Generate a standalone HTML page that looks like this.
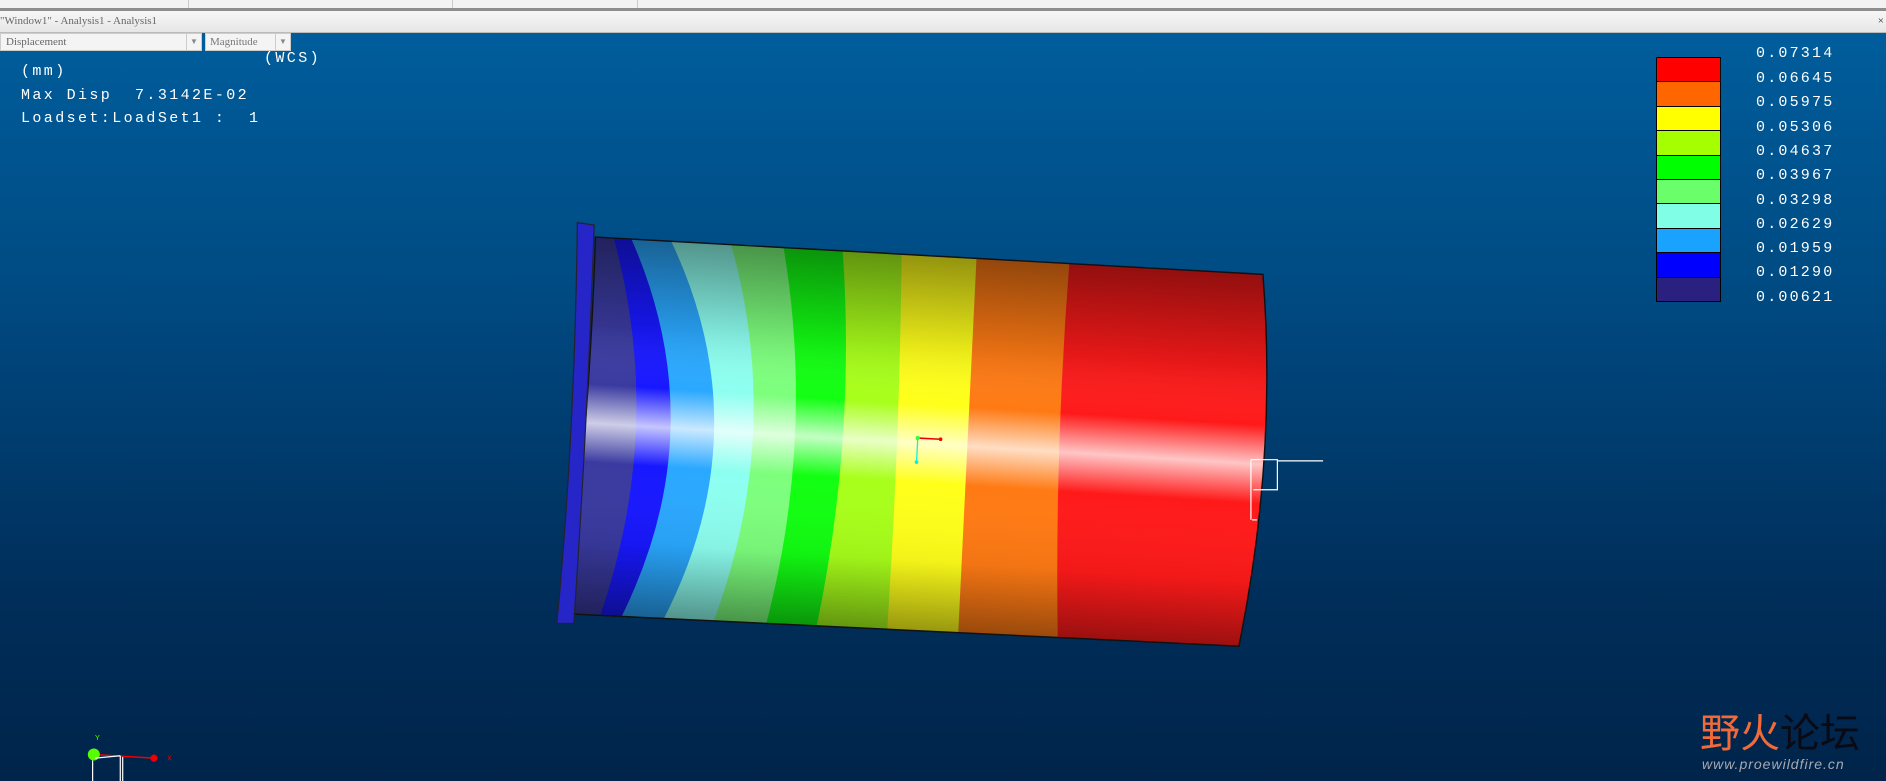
<!DOCTYPE html>
<html><head><meta charset="utf-8"><style>
html,body{margin:0;padding:0;width:1886px;height:781px;overflow:hidden;background:#00406f}
.bg{position:absolute;left:0;top:33px;width:1886px;height:748px;background:linear-gradient(#005d9b,#004a82 35%,#002e5a 75%,#00244a)}
.t{position:absolute;color:#fff;font-family:"Liberation Mono",monospace;font-size:15px;letter-spacing:2.4px;white-space:pre;line-height:18px}
.lg{position:absolute;color:#fff;font-family:"Liberation Mono",monospace;font-size:15px;letter-spacing:2.2px;line-height:18px}
</style></head><body>
<div style="position:absolute;left:0;top:0;width:1886px;height:8px;background:#f3f3f3"></div>
<div style="position:absolute;left:188px;top:0;width:1px;height:8px;background:#ccc"></div>
<div style="position:absolute;left:452px;top:0;width:1px;height:8px;background:#ccc"></div>
<div style="position:absolute;left:637px;top:0;width:1px;height:8px;background:#ccc"></div>
<div style="position:absolute;left:0;top:8px;width:1886px;height:3px;background:#8e8e8e"></div>
<div style="position:absolute;left:0;top:11px;width:1886px;height:21px;background:linear-gradient(#f7f7f7,#e6e6e6);border-bottom:1px solid #bbb;font-family:'Liberation Serif',serif;font-size:11px;color:#666;line-height:21px">"Window1" - Analysis1 - Analysis1<span style="position:absolute;right:2px;color:#333">×</span></div>
<div class="bg"></div>
<div style="position:absolute;left:0;top:33px;width:202px;height:18px;background:#f4f4f4;border:1px solid #ccc;box-sizing:border-box;font-family:'Liberation Serif',serif;font-size:11px;color:#666;line-height:16px;padding-left:5px">Displacement<span style="position:absolute;right:0;top:0;width:14px;height:16px;border-left:1px solid #ccc;text-align:center;font-size:8px;color:#888">▼</span></div>
<div style="position:absolute;left:205px;top:33px;width:86px;height:18px;background:#f4f4f4;border:1px solid #ccc;box-sizing:border-box;font-family:'Liberation Serif',serif;font-size:11px;color:#777;line-height:16px;padding-left:4px">Magnitude<span style="position:absolute;right:0;top:0;width:14px;height:16px;border-left:1px solid #ccc;text-align:center;font-size:8px;color:#888">▼</span></div>
<div class="t" style="left:264px;top:50px">(WCS)</div>
<div class="t" style="left:21px;top:63px">(mm)</div>
<div class="t" style="left:21px;top:87px">Max Disp  7.3142E-02</div>
<div class="t" style="left:21px;top:110px">Loadset:LoadSet1 :  1</div>

<svg style="position:absolute;left:0;top:0" width="1886" height="781" viewBox="0 0 1568 649" preserveAspectRatio="none">
<defs>
<clipPath id="cy"><path d="M495,197 L1050,228 Q1062,380 1030,537 L470,510 Q490,360 495,197Z"/></clipPath>
<linearGradient id="sh" gradientUnits="userSpaceOnUse" x1="760" y1="205" x2="740" y2="530">
<stop offset="0" stop-color="#000" stop-opacity="0.45"/>
<stop offset="0.25" stop-color="#000" stop-opacity="0.1"/>
<stop offset="0.40" stop-color="#fff" stop-opacity="0"/>
<stop offset="0.50" stop-color="#fff" stop-opacity="0.75"/>
<stop offset="0.60" stop-color="#fff" stop-opacity="0"/>
<stop offset="0.80" stop-color="#000" stop-opacity="0.05"/>
<stop offset="1" stop-color="#000" stop-opacity="0.45"/>
</linearGradient>
</defs>
<g clip-path="url(#cy)">
<rect x="400" y="150" width="700" height="420" fill="#ff1a1a"/>
<path d="M400,150 L895,150 Q875,355 880,560 L400,560Z" fill="#ff7a14"/>
<path d="M400,150 L815,150 Q805,355 795,560 L400,560Z" fill="#ffff1a"/>
<path d="M400,150 L750,150 Q750,355 735,560 L400,560Z" fill="#a8ff1a"/>
<path d="M400,150 L695,150 Q720,355 670,560 L400,560Z" fill="#12ff12"/>
<path d="M400,150 L640,150 Q690,355 625,560 L400,560Z" fill="#7dff7d"/>
<path d="M400,150 L590,150 Q670,355 575,560 L400,560Z" fill="#8dfff0"/>
<path d="M400,150 L530,150 Q660,355 525,560 L400,560Z" fill="#2aa8ff"/>
<path d="M400,150 L500,150 Q620,355 490,560 L400,560Z" fill="#1818ff"/>
<path d="M400,150 L495,150 Q570,355 480,560 L400,560Z" fill="#3a3aa0"/>
<rect x="400" y="150" width="700" height="420" fill="url(#sh)"/>
</g>
<path d="M495,197 L1050,228 Q1062,380 1030,537 L470,510 Q490,360 495,197Z" fill="none" stroke="#111" stroke-width="1.2"/>
<path d="M480,185 L494,187 Q488,360 477,518 L463,518 Q478,360 480,185Z" fill="#2626c8" stroke="#223" stroke-width="1"/>
<line x1="763" y1="364" x2="782" y2="365" stroke="#e00" stroke-width="1.3"/>
<line x1="763" y1="364" x2="762" y2="384" stroke="#0ee" stroke-width="1"/>
<circle cx="763" cy="364" r="1.8" fill="#3f3"/><circle cx="782" cy="365" r="1.5" fill="#f00"/><circle cx="762" cy="384" r="1.5" fill="#0ee"/>
<path d="M1040,382 L1062,382 L1062,407 L1042,407 M1040,382 L1040,432 M1062,383 L1100,383 M1041,432 L1045,432" stroke="#fff" stroke-width="1" fill="none"/>
<line x1="78" y1="627" x2="128" y2="630" stroke="#e00" stroke-width="1.2"/>
<circle cx="78" cy="627" r="5" fill="#5f0"/><circle cx="128" cy="630" r="3" fill="#e00"/>
<text x="79" y="615" fill="#5f0" font-size="6" font-family="Liberation Sans">Y</text>
<text x="139" y="632" fill="#e00" font-size="6" font-family="Liberation Sans">X</text>
<path d="M77,632 L77,649 M79,630 L100,628 M100,628 L100,649 M102,629 L102,649" stroke="#fff" stroke-width="1" fill="none"/>
</svg>

<div style="position:absolute;left:1656px;top:57px;width:65px;height:245px;border:1px solid #000;box-sizing:border-box">
<div style="height:24px;background:#ff0000;border-bottom:1px solid #000;box-sizing:border-box"></div>
<div style="height:25px;background:#ff6600;border-bottom:1px solid #000;box-sizing:border-box"></div>
<div style="height:24px;background:#ffff00;border-bottom:1px solid #000;box-sizing:border-box"></div>
<div style="height:25px;background:#a6ff00;border-bottom:1px solid #000;box-sizing:border-box"></div>
<div style="height:24px;background:#00ff00;border-bottom:1px solid #000;box-sizing:border-box"></div>
<div style="height:24px;background:#6aff6a;border-bottom:1px solid #000;box-sizing:border-box"></div>
<div style="height:25px;background:#80ffe6;border-bottom:1px solid #000;box-sizing:border-box"></div>
<div style="height:24px;background:#19a3ff;border-bottom:1px solid #000;box-sizing:border-box"></div>
<div style="height:25px;background:#0000ff;border-bottom:1px solid #000;box-sizing:border-box"></div>
<div style="height:23px;background:#29207f"></div>
</div>
<div class="lg" style="left:1756px;top:45px">0.07314</div>
<div class="lg" style="left:1756px;top:70px">0.06645</div>
<div class="lg" style="left:1756px;top:94px">0.05975</div>
<div class="lg" style="left:1756px;top:119px">0.05306</div>
<div class="lg" style="left:1756px;top:143px">0.04637</div>
<div class="lg" style="left:1756px;top:167px">0.03967</div>
<div class="lg" style="left:1756px;top:192px">0.03298</div>
<div class="lg" style="left:1756px;top:216px">0.02629</div>
<div class="lg" style="left:1756px;top:240px">0.01959</div>
<div class="lg" style="left:1756px;top:264px">0.01290</div>
<div class="lg" style="left:1756px;top:289px">0.00621</div>

<div style="position:absolute;left:1700px;top:712px;font-family:'Liberation Sans','Noto Sans CJK SC',sans-serif;font-size:40px;line-height:44px;white-space:nowrap"><span style="color:#f06a3a">野火</span><span style="color:#0a0a14">论坛</span></div>
<div style="position:absolute;left:1702px;top:756px;font-family:'Liberation Sans',sans-serif;font-size:14px;font-style:italic;color:#a8a8b0;letter-spacing:1px">www.proewildfire.cn</div>
</body></html>
